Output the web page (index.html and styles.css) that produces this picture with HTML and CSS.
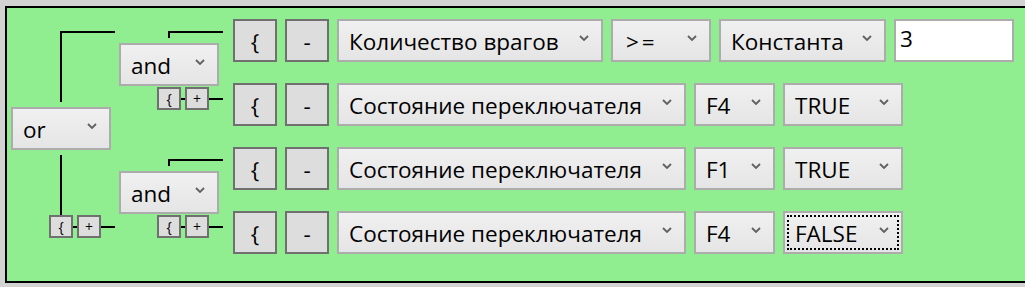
FILE: index.html
```html
<!DOCTYPE html>
<html lang="ru">
<head>
    <meta charset="UTF-8">
    <title>Условия</title>
    <link rel="stylesheet" href="styles.css">
</head>
<body>

<div class="panel">
    <div class="or-node">
        <div class="stub-top"></div>
        <div class="combo combo-op"><span>or</span><svg class="chev" viewBox="0 0 10 6"><polyline points="1,1 5,5 9,1"/></svg></div>
        <div class="stem"></div>
        <div class="mini-bar">
            <div class="mini">{</div><i class="link short"></i><div class="mini">+</div><i class="link long"></i>
        </div>
    </div>

    <div class="groups">
        <div class="group">
            <div class="and-node">
                <div class="stub"></div>
                <div class="combo combo-op"><span>and</span><svg class="chev" viewBox="0 0 10 6"><polyline points="1,1 5,5 9,1"/></svg></div>
                <div class="mini-bar">
                    <div class="mini">{</div><i class="link short"></i><div class="mini">+</div><i class="link long"></i>
                </div>
            </div>
            <div class="rows">
                <div class="row">
                    <div class="btn">{</div>
                    <div class="btn">-</div>
                    <div class="combo w-enemy"><span>Количество врагов</span><svg class="chev" viewBox="0 0 10 6"><polyline points="1,1 5,5 9,1"/></svg></div>
                    <div class="combo w-cmp"><span class="cmp">&gt;=</span><svg class="chev" viewBox="0 0 10 6"><polyline points="1,1 5,5 9,1"/></svg></div>
                    <div class="combo w-const"><span>Константа</span><svg class="chev" viewBox="0 0 10 6"><polyline points="1,1 5,5 9,1"/></svg></div>
                    <input class="value" type="text" value="3">
                </div>
                <div class="row">
                    <div class="btn">{</div>
                    <div class="btn">-</div>
                    <div class="combo w-switch"><span>Состояние переключателя</span><svg class="chev" viewBox="0 0 10 6"><polyline points="1,1 5,5 9,1"/></svg></div>
                    <div class="combo w-key"><span>F4</span><svg class="chev" viewBox="0 0 10 6"><polyline points="1,1 5,5 9,1"/></svg></div>
                    <div class="combo w-bool"><span>TRUE</span><svg class="chev" viewBox="0 0 10 6"><polyline points="1,1 5,5 9,1"/></svg></div>
                </div>
            </div>
        </div>

        <div class="group">
            <div class="and-node">
                <div class="stub"></div>
                <div class="combo combo-op"><span>and</span><svg class="chev" viewBox="0 0 10 6"><polyline points="1,1 5,5 9,1"/></svg></div>
                <div class="mini-bar">
                    <div class="mini">{</div><i class="link short"></i><div class="mini">+</div><i class="link long"></i>
                </div>
            </div>
            <div class="rows">
                <div class="row">
                    <div class="btn">{</div>
                    <div class="btn">-</div>
                    <div class="combo w-switch"><span>Состояние переключателя</span><svg class="chev" viewBox="0 0 10 6"><polyline points="1,1 5,5 9,1"/></svg></div>
                    <div class="combo w-key"><span>F1</span><svg class="chev" viewBox="0 0 10 6"><polyline points="1,1 5,5 9,1"/></svg></div>
                    <div class="combo w-bool"><span>TRUE</span><svg class="chev" viewBox="0 0 10 6"><polyline points="1,1 5,5 9,1"/></svg></div>
                </div>
                <div class="row">
                    <div class="btn">{</div>
                    <div class="btn">-</div>
                    <div class="combo w-switch"><span>Состояние переключателя</span><svg class="chev" viewBox="0 0 10 6"><polyline points="1,1 5,5 9,1"/></svg></div>
                    <div class="combo w-key"><span>F4</span><svg class="chev" viewBox="0 0 10 6"><polyline points="1,1 5,5 9,1"/></svg></div>
                    <div class="combo w-bool focused"><span>FALSE</span><svg class="chev" viewBox="0 0 10 6"><polyline points="1,1 5,5 9,1"/></svg></div>
                </div>
            </div>
        </div>
    </div>
</div>

</body>
</html>
```

FILE: styles.css
```css
body {
    margin: 0;
    padding: 6px 0 0 5px;
    background-color: #d3d3d3;
    font-family: 'Open Sans', sans-serif;
    color: #000;
    overflow: hidden;
}
.panel {
    display: flex;
    height: 273px;
    padding-left: 4px;
    background-color: #90ee90;
    border: 2px solid #000;
    border-right: none;
}

/* tree nodes */
.or-node {
    width: 104px;
    margin-right: 4px;
    padding-top: 23px;
    display: flex;
    flex-direction: column;
}
.stub-top {
    width: 53px;
    height: 69px;
    margin-left: 49px;
    border-top: 2px solid #000;
    border-left: 2px solid #000;
}
.or-node .combo {
    margin-top: 5px;
}
.stem {
    width: 2px;
    height: 60px;
    margin: 5px 0 0 49px;
    background: #000;
}
.groups {
    display: flex;
    flex-direction: column;
    gap: 21px;
    padding-top: 11px;
}
.group {
    display: flex;
}
.and-node {
    width: 104px;
    margin-right: 10px;
    padding-top: 12px;
    display: flex;
    flex-direction: column;
}
.stub {
    width: 53px;
    height: 5px;
    margin-left: 49px;
    border-top: 2px solid #000;
    border-left: 2px solid #000;
}
.and-node .combo {
    margin-top: 5px;
}
.and-node .mini-bar {
    margin-top: 1px;
}
.mini-bar {
    display: flex;
    align-items: center;
    margin-left: 38px;
}
.mini {
    width: 24px;
    height: 23px;
    box-sizing: border-box;
    border: 2px solid #707070;
    background: #dddddd;
    font-size: 14px;
    line-height: 19px;
    text-align: center;
}
.link {
    height: 2px;
    background: #000;
}
.link.short { width: 4px; }
.link.long { width: 14px; }

/* condition rows */
.rows {
    display: flex;
    flex-direction: column;
    gap: 21px;
}
.row {
    display: flex;
    gap: 8px;
    height: 43px;
}
.btn {
    width: 44px;
    height: 43px;
    box-sizing: border-box;
    border: 2px solid #707070;
    background: #dddddd;
    font-size: 22.5px;
    line-height: 36px;
    padding-top: 3px;
    text-align: center;
}
.combo {
    position: relative;
    display: flex;
    align-items: flex-start;
    width: 100px;
    height: 43px;
    box-sizing: border-box;
    padding: 3px 12px 0 10px;
    border: 2px solid #acacac;
    background: linear-gradient(#f0f0f0, #e5e5e5);
    font-size: 22.5px;
    line-height: 36px;
    white-space: nowrap;
}
.chev {
    width: 10px;
    height: 6px;
    margin: 11px 0 0 auto;
    flex-shrink: 0;
    fill: none;
    stroke: #606060;
    stroke-width: 1.8;
}
.cmp {
    letter-spacing: 3px;
    padding-left: 3px;
}
.w-enemy { width: 266px; }
.w-cmp { width: 100px; }
.w-const { width: 167px; }
.w-switch { width: 349px; }
.w-key { width: 81px; }
.w-bool { width: 120px; }
.focused::after {
    content: "";
    position: absolute;
    inset: 2px;
    border: 2px dotted #000;
}
.value {
    width: 120px;
    height: 43px;
    box-sizing: border-box;
    margin: 0;
    padding: 2px 4px 7px;
    border: 2px solid #acacac;
    background: #fff;
    font-family: 'Open Sans', sans-serif;
    font-size: 22.5px;
    line-height: 30px;
    outline: none;
}
```
